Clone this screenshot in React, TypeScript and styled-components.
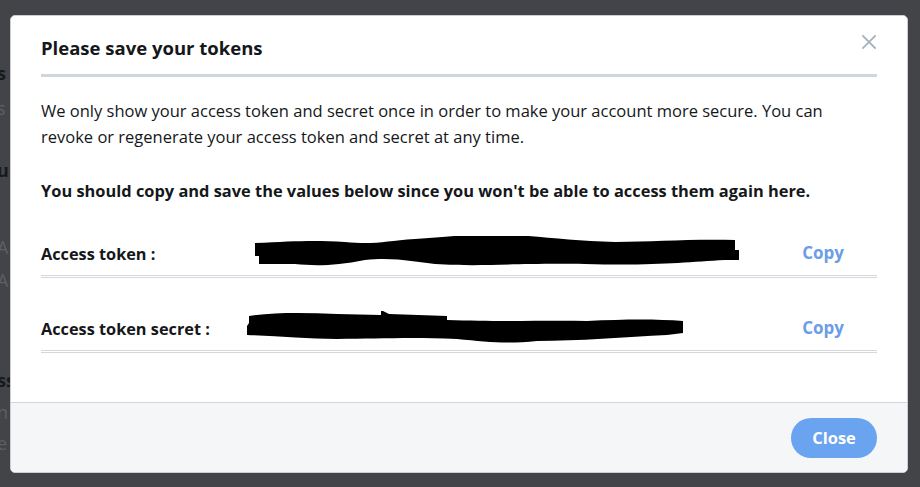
import React from 'react'
import styled, { createGlobalStyle } from 'styled-components'

const GlobalStyle = createGlobalStyle`
  html, body {
    margin: 0;
    padding: 0;
    width: 920px;
    height: 487px;
    overflow: hidden;
    background: #424448;
    font-family: "Open Sans", "Liberation Sans", sans-serif;
  }
`

const Page = styled.div`
  position: relative;
  width: 920px;
  height: 487px;
  background: #424448;
`

const BackPage = styled.div`
  display: flex;
  flex-direction: column;
  padding: 62px 0 0 0;
  font-size: 18px;
  line-height: 22px;
`

const BackLine = styled.div<{ $top: number; $faint?: boolean }>`
  margin-top: ${p => p.$top}px;
  margin-left: -3px;
  height: 22px;
  color: ${p => (p.$faint ? '#5d5f64' : '#17191c')};
  font-weight: ${p => (p.$faint ? 400 : 700)};
`

const Overlay = styled.div`
  position: absolute;
  inset: 0;
  padding: 15px 12px 14px 10px;
  box-sizing: border-box;
`

const Modal = styled.div`
  display: flex;
  flex-direction: column;
  height: 100%;
  background: #fff;
  border-radius: 5px;
  overflow: hidden;
  border: 1px solid #c9ced6;
  box-sizing: border-box;
`

const Header = styled.div`
  position: relative;
  margin: 0 30px;
  padding: 18px 0 12px;
  border-bottom: 3px solid #d0d6de;
`

const Title = styled.h2`
  margin: 0;
  font-size: 18.5px;
  line-height: 28px;
  font-weight: 700;
  color: #15171a;
`

const CloseX = styled.button`
  position: absolute;
  right: 0;
  top: 18px;
  width: 16px;
  height: 16px;
  padding: 0;
  border: none;
  background: none;
  cursor: pointer;
`

const Body = styled.div`
  flex: 1;
  padding: 21px 30px 0;
  color: #15171a;
`

const Text = styled.p`
  margin: 0 0 28px;
  font-size: 16.5px;
  line-height: 26px;
`

const Strong = styled(Text)`
  font-weight: 700;
  font-size: 16.4px;
  margin-bottom: 29px;
`

const Row = styled.div`
  display: grid;
  grid-template-columns: 200px 1fr 80px;
  align-items: center;
  height: 42px;
  border-bottom: 3px double #d4d8de;
  margin-bottom: 30px;
`

const Label = styled.span`
  font-size: 16.3px;
  font-weight: 700;
`

const Token = styled.div`
  height: 36px;
  display: flex;
  align-items: center;
`

const CopyLink = styled.button`
  justify-self: end;
  margin: 0 33px 3px 0;
  border: none;
  background: none;
  padding: 0;
  color: #6b9ee6;
  font-family: inherit;
  font-size: 17px;
  font-weight: 700;
  cursor: pointer;
`

const Footer = styled.div`
  display: flex;
  justify-content: flex-end;
  align-items: center;
  height: 69px;
  padding: 0 30px;
  background: #f5f6f8;
  border-top: 1px solid #d0d5dd;
`

const CloseButton = styled.button`
  width: 86px;
  height: 40px;
  border: none;
  border-radius: 20px;
  background: #6aa3f0;
  color: #fff;
  font-family: inherit;
  font-size: 16.5px;
  font-weight: 700;
  cursor: pointer;
`

const Scribble = ({ d, width, x }: { d: string; width: number; x: number }) => (
  <svg width={width + x} height="36" viewBox={`0 0 ${width + x} 36`}>
    <path d={d} fill="#000" transform={`translate(${x} 0)`} />
  </svg>
)

// hand-drawn redaction marks over the token values
const token1 =
  'M0 7 C40 5 60 4 90 6 C120 9 130 5 160 3 C200 0 230 -3 260 -1 C290 1 320 5 360 6 C400 6 430 3 480 4 L480 14 L484 14 L484 24 L470 24 C430 26 400 30 330 28 C250 27 230 31 180 28 C160 26 140 21 110 24 C80 30 60 30 40 28 L4 28 L4 20 L0 20 Z'

const token2 =
  'M2 5 C30 1 60 2 90 3 L134 4 L134 -1 L142 3 L200 5 L200 9 C260 11 300 9 340 10 C380 8 410 8 436 10 L436 22 L420 24 C380 26 330 30 290 30 C260 33 240 31 210 28 C160 26 130 28 90 28 C60 28 30 25 0 24 L0 15 L2 12 Z'

export default function App() {
  return (
    <>
      <GlobalStyle />
      <Page>
        <BackPage>
          <BackLine $top={0}>s</BackLine>
          <BackLine $top={13} $faint>s</BackLine>
          <BackLine $top={40}>u</BackLine>
          <BackLine $top={55} $faint>AF</BackLine>
          <BackLine $top={11} $faint>AF</BackLine>
          <BackLine $top={78}>ss</BackLine>
          <BackLine $top={10} $faint>n</BackLine>
          <BackLine $top={9} $faint>e</BackLine>
        </BackPage>
        <Overlay>
          <Modal>
            <Header>
              <Title>Please save your tokens</Title>
              <CloseX aria-label="Close">
                <svg width="16" height="16" viewBox="0 0 16 16">
                  <path d="M2 2 L14 14 M14 2 L2 14" stroke="#a8b3c0" strokeWidth="1.8" strokeLinecap="square" />
                </svg>
              </CloseX>
            </Header>
            <Body>
              <Text>
                We only show your access token and secret once in order to make your account more secure. You can
                revoke or regenerate your access token and secret at any time.
              </Text>
              <Strong>
                You should copy and save the values below since you won't be able to access them again here.
              </Strong>
              <Row>
                <Label>Access token :</Label>
                <Token>
                  <Scribble d={token1} width={486} x={14} />
                </Token>
                <CopyLink>Copy</CopyLink>
              </Row>
              <Row>
                <Label>Access token secret :</Label>
                <Token>
                  <Scribble d={token2} width={438} x={6} />
                </Token>
                <CopyLink>Copy</CopyLink>
              </Row>
            </Body>
            <Footer>
              <CloseButton>Close</CloseButton>
            </Footer>
          </Modal>
        </Overlay>
      </Page>
    </>
  )
}
